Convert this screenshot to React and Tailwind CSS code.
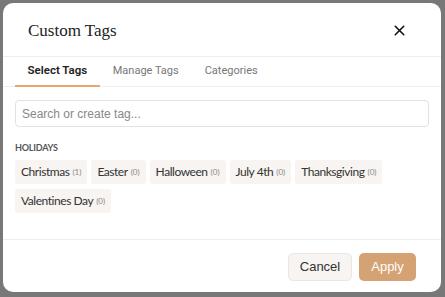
import { X } from 'lucide-react'

const TAGS = [
  { name: 'Christmas', count: 1 },
  { name: 'Easter', count: 0 },
  { name: 'Halloween', count: 0 },
  { name: 'July 4th', count: 0 },
  { name: 'Thanksgiving', count: 0 },
  { name: 'Valentines Day', count: 0 },
]

const TABS = ['Select Tags', 'Manage Tags', 'Categories']

export default function App() {
  return (
    <div className="w-[445px] h-[297px] bg-[#787878] pl-[3px] pt-[3px] overflow-hidden">
      <div className="w-[438px] h-[289px] bg-white rounded-[10px] flex flex-col">
        {/* Header */}
        <div className="h-[54px] flex items-center justify-between pl-[25px] pr-[33px] border-b border-[#eeeeee]">
          <h2
            className="text-[17px] text-[#222] pt-[3px]"
            style={{ fontFamily: "'Liberation Serif', serif" }}
          >
            Custom Tags
          </h2>
          <X size={17} strokeWidth={2.2} className="text-[#111] mt-[1px]" />
        </div>

        {/* Tabs */}
        <div
          className="h-[30px] flex px-[12px] border-b border-[#eeeeee]"
          style={{ fontFamily: 'Roboto, sans-serif' }}
        >
          {TABS.map((t, i) => (
            <div
              key={t}
              className={
                i === 0
                  ? 'px-[12.5px] flex items-center text-[11.5px] font-semibold text-[#222] border-b-2 border-[#e7a772] -mb-px'
                  : 'px-[13px] flex items-center text-[11px] text-[#777]'
              }
            >
              {t}
            </div>
          ))}
        </div>

        {/* Body */}
        <div className="flex-1 px-[12px] pt-[13px]">
          <div
            className="h-[27px] border border-[#e2e2e2] rounded-[4px] flex items-center px-[6px] text-[12px] text-[#888]"
            style={{ fontFamily: "'Liberation Sans', Arial, sans-serif" }}
          >
            Search or create tag...
          </div>

          <div style={{ fontFamily: 'Lato, sans-serif' }}>
            <div className="mt-[14px] text-[9px] font-bold text-[#555] tracking-[-0.2px]">HOLIDAYS</div>
            <div className="mt-[5px] flex flex-wrap gap-x-[4px] gap-y-[5px]">
              {TAGS.map(({ name, count }) => (
                <div
                  key={name}
                  className="h-[24px] px-[6px] bg-[#f7f4f1] rounded-[3px] flex items-center gap-[3px] text-[12px] text-[#333] tracking-[-0.45px]"
                >
                  {name}
                  <span className="text-[8px] text-[#888] tracking-normal">({count})</span>
                </div>
              ))}
            </div>
          </div>
        </div>

        {/* Footer */}
        <div
          className="h-[53px] border-t border-[#eeeeee] flex items-center justify-end gap-[7px] pr-[25px] pt-[1px]"
          style={{ fontFamily: "'Liberation Sans', Arial, sans-serif" }}
        >
          <button className="h-[28px] w-[64px] rounded-[5px] bg-[#f7f4f1] border border-[#ebe6e1] text-[13px] text-[#333]">
            Cancel
          </button>
          <button className="h-[28px] w-[57px] rounded-[5px] bg-[#d5a273] text-[13px] text-white">
            Apply
          </button>
        </div>
      </div>
    </div>
  )
}
